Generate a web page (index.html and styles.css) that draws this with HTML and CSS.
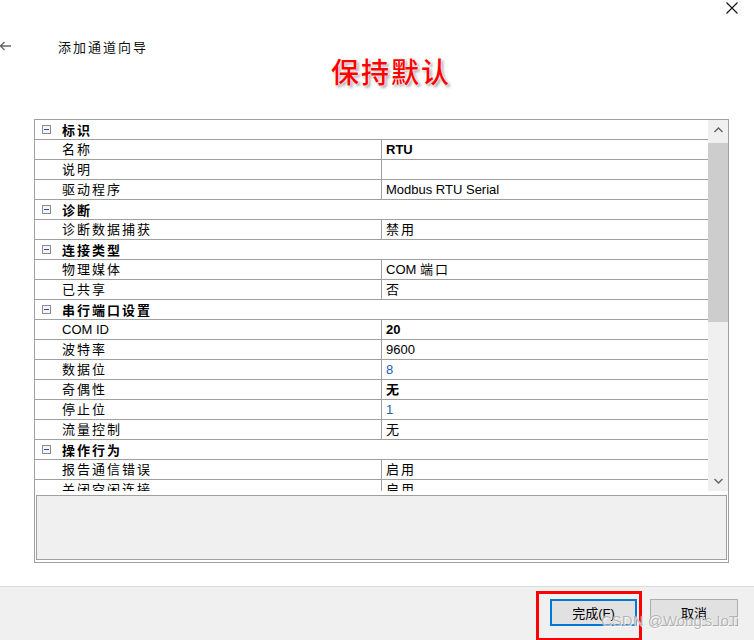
FILE: index.html
```html
<!DOCTYPE html>
<html lang="zh-CN">
  <head>
    <meta charset="UTF-8" />
    <title>添加通道向导</title>
    <link rel="stylesheet" href="styles.css">
  </head>
  <body>
    <div class="window">
      <!-- 顶部关闭按钮 -->
      <div class="topbar">
        <svg class="close" width="12" height="12" viewBox="0 0 12 12">
          <path d="M0.5 0.5 L11.5 11.5 M11.5 0.5 L0.5 11.5" stroke="#111" stroke-width="1.1" fill="none" />
        </svg>
      </div>
      <div class="nav">
        <svg class="back" width="12" height="10" viewBox="0 0 12 10">
          <path d="M0 5 H11 M4.5 1 L0.5 5 L4.5 9" stroke="#666" stroke-width="1.3" fill="none" />
        </svg>
        <span class="nav_title">添加通道向导</span>
      </div>
      <div class="banner">保持默认</div>

      <!-- 属性表 -->
      <div class="panel">
        <div class="grid_wrap">
          <ul class="rows">
            <li class="cat"><svg class="minus" width="9" height="9" viewBox="0 0 9 9"><rect x="0.5" y="0.5" width="8" height="8" fill="#f4f4f4" stroke="#8c8c8c" /><path d="M2 4.5 H7" stroke="#2c4c9c" stroke-width="1" /></svg><span>标识</span></li>
            <li class="item"><span class="key">名称</span><span class="val lat b">RTU</span></li>
            <li class="item"><span class="key">说明</span><span class="val"></span></li>
            <li class="item"><span class="key">驱动程序</span><span class="val lat">Modbus RTU Serial</span></li>
            <li class="cat"><svg class="minus" width="9" height="9" viewBox="0 0 9 9"><rect x="0.5" y="0.5" width="8" height="8" fill="#f4f4f4" stroke="#8c8c8c" /><path d="M2 4.5 H7" stroke="#2c4c9c" stroke-width="1" /></svg><span>诊断</span></li>
            <li class="item"><span class="key">诊断数据捕获</span><span class="val">禁用</span></li>
            <li class="cat"><svg class="minus" width="9" height="9" viewBox="0 0 9 9"><rect x="0.5" y="0.5" width="8" height="8" fill="#f4f4f4" stroke="#8c8c8c" /><path d="M2 4.5 H7" stroke="#2c4c9c" stroke-width="1" /></svg><span>连接类型</span></li>
            <li class="item"><span class="key">物理媒体</span><span class="val"><span class="lat">COM </span>端口</span></li>
            <li class="item"><span class="key">已共享</span><span class="val">否</span></li>
            <li class="cat"><svg class="minus" width="9" height="9" viewBox="0 0 9 9"><rect x="0.5" y="0.5" width="8" height="8" fill="#f4f4f4" stroke="#8c8c8c" /><path d="M2 4.5 H7" stroke="#2c4c9c" stroke-width="1" /></svg><span>串行端口设置</span></li>
            <li class="item"><span class="key lat">COM ID</span><span class="val lat b">20</span></li>
            <li class="item"><span class="key">波特率</span><span class="val lat">9600</span></li>
            <li class="item"><span class="key">数据位</span><span class="val lat blue">8</span></li>
            <li class="item"><span class="key">奇偶性</span><span class="val b">无</span></li>
            <li class="item"><span class="key">停止位</span><span class="val lat blue">1</span></li>
            <li class="item"><span class="key">流量控制</span><span class="val">无</span></li>
            <li class="cat"><svg class="minus" width="9" height="9" viewBox="0 0 9 9"><rect x="0.5" y="0.5" width="8" height="8" fill="#f4f4f4" stroke="#8c8c8c" /><path d="M2 4.5 H7" stroke="#2c4c9c" stroke-width="1" /></svg><span>操作行为</span></li>
            <li class="item"><span class="key">报告通信错误</span><span class="val">启用</span></li>
            <li class="item"><span class="key">关闭空闲连接</span><span class="val">启用</span></li>
          </ul>
          <div class="scrollbar">
            <div class="sb_btn">
              <svg width="9" height="6" viewBox="0 0 9 6"><path d="M0.5 5 L4.5 1 L8.5 5" stroke="#606060" stroke-width="1.3" fill="none" /></svg>
            </div>
            <div class="sb_track"><div class="sb_thumb"></div></div>
            <div class="sb_btn">
              <svg width="9" height="6" viewBox="0 0 9 6"><path d="M0.5 1 L4.5 5 L8.5 1" stroke="#606060" stroke-width="1.3" fill="none" /></svg>
            </div>
          </div>
        </div>
        <div class="desc"></div>
      </div>

      <!-- 底部按钮 -->
      <div class="footer">
        <div class="btn_wrap">
          <button class="btn primary">完成(F)</button>
          <span class="mark"></span>
        </div>
        <button class="btn">取消</button>
        <span class="watermark">CSDN @Wong's IoT</span>
      </div>
    </div>
  </body>
</html>
```

FILE: styles.css
```css
* {
  box-sizing: border-box;
  margin: 0;
  padding: 0;
  list-style: none;
}
body {
  width: 754px;
  height: 640px;
  overflow: hidden;
  background-color: #fff;
  font-family: "Liberation Sans", "Noto Sans CJK SC", sans-serif;
  font-size: 13px;
  color: #000;
}
.window {
  display: flex;
  flex-direction: column;
  height: 640px;
}
.topbar {
  display: flex;
  justify-content: flex-end;
  height: 36px;
  padding: 2px 16px 0 0;
}
.nav {
  display: flex;
  align-items: center;
  height: 20px;
}
.back {
  margin-right: 46px;
}
.nav_title {
  letter-spacing: 2px;
  color: #111;
}
.banner {
  height: 63px;
  padding-left: 331px;
  line-height: 30px;
  font-family: "Noto Sans CJK SC", sans-serif;
  font-size: 28px;
  font-weight: 500;
  letter-spacing: 2px;
  color: #ff0000;
  text-shadow: 0 0 2px #fff, 0 0 3px #fff, 2px 2px 3px rgba(0, 0, 0, 0.45);
}

/* property grid */
.panel {
  display: flex;
  flex-direction: column;
  width: 695px;
  height: 444px;
  margin-left: 34px;
  border: 1px solid #a0a0a0;
}
.grid_wrap {
  display: flex;
  height: 371px;
  overflow: hidden;
}
.rows {
  flex: 1;
  letter-spacing: 2px;
}
.rows li {
  display: flex;
  align-items: center;
  height: 20px;
  border-bottom: 1px solid #a0a0a0;
}
.cat {
  font-weight: bold;
}
.minus {
  margin: 0 11px 0 7px;
}
.key {
  width: 347px;
  height: 100%;
  padding-left: 27px;
  line-height: 19px;
  border-right: 1px solid #a0a0a0;
}
.val {
  padding-left: 4px;
  line-height: 19px;
}
.lat {
  letter-spacing: 0;
}
.b {
  font-weight: bold;
}
.blue {
  color: #1f5bb0;
}
.scrollbar {
  display: flex;
  flex-direction: column;
  width: 20px;
  background-color: #f0f0f0;
}
.sb_btn {
  display: flex;
  align-items: center;
  justify-content: center;
  height: 20px;
}
.sb_track {
  flex: 1;
  padding-top: 3px;
}
.sb_thumb {
  height: 179px;
  background-color: #cdcdcd;
}
.desc {
  height: 65px;
  margin: 4px 1px 0 1px;
  background-color: #f0f0f0;
  border: 1px solid #a0a0a0;
}

/* footer */
.footer {
  position: relative;
  display: flex;
  justify-content: flex-end;
  gap: 13px;
  height: 54px;
  margin-top: auto;
  padding: 12px 16px 0 0;
  background-color: #f0f0f0;
  border-top: 1px solid #dcdcdc;
}
.btn_wrap {
  position: relative;
}
.btn {
  width: 88px;
  height: 27px;
  font-family: inherit;
  font-size: 13px;
  color: #000;
  background-color: #e1e1e1;
  border: 1px solid #adadad;
}
.btn.primary {
  width: 87px;
  border: 2px solid #0078d7;
}
.mark {
  position: absolute;
  left: -14px;
  top: -8px;
  width: 106px;
  height: 50px;
  border: 3px solid #f00;
}
.watermark {
  position: absolute;
  right: 16px;
  top: 25px;
  font-size: 15px;
  color: rgba(110, 110, 110, 0.5);
  text-shadow: 0 0 1px #fff, 1px 1px 0 rgba(255, 255, 255, 0.8);
}
```
